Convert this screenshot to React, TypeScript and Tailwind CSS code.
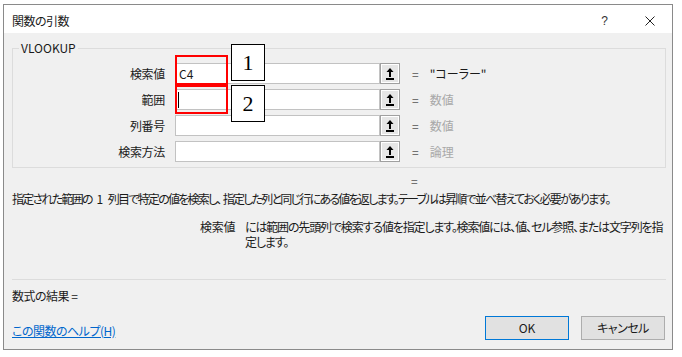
import React from "react"

const jp = "font-['Noto_Sans_CJK_JP','Noto_Sans',sans-serif] [font-feature-settings:'palt']"

const rows = [
  { label: "検索値", value: "\"コーラー\"", dark: true, text: "C4" },
  { label: "範囲", value: "数値", dark: false, text: "", cursor: true },
  { label: "列番号", value: "数値", dark: false, text: "" },
  { label: "検索方法", value: "論理", dark: false, text: "" },
]

function RefIcon() {
  return (
    <svg width="10" height="14" viewBox="0 0 10 14">
      <path d="M5 1 L8.5 5 L6 5 L6 10 L4 10 L4 5 L1.5 5 Z" fill="#000" />
      <rect x="1" y="11" width="8" height="2" fill="#000" />
    </svg>
  )
}

function ArgRow({ label, value, dark, text, cursor }: { label: string; value: string; dark: boolean; text: string; cursor?: boolean }) {
  return (
    <div className="flex items-center h-[21px]">
      <div className="w-[152px] text-right text-[12px] text-[#1a1a1a] leading-[16px] tracking-[-0.3px]">{label}</div>
      <div className="ml-[10px] w-[205px] h-[21px] bg-white border border-[#c2c2c2] flex items-center pl-[3px] text-[12px] relative">
        {cursor && <span className="absolute left-[2px] top-[2px] w-[1px] h-[16px] bg-black" />}
        {text}
      </div>
      <div className="w-[20px] h-[21px] border border-[#a0a0a0] bg-[#e6e6e6] shadow-[inset_1px_1px_0_#fff,inset_-1px_-1px_0_#fff] flex items-center justify-center">
        <RefIcon />
      </div>
      <span className="ml-[12px] text-[12px] text-[#555]">=</span>
      <span className={"ml-[11px] text-[12px] " + (dark ? "text-[#1a1a1a]" : "text-[#a8a8a8]")}>{value}</span>
    </div>
  )
}

export default function App() {
  return (
    <div className={"relative w-[682px] h-[357px] bg-white pl-[3px] pt-[4px] " + jp}>
      <div className="w-[670px] h-[346px] border border-[#8a8a8a] flex flex-col">
        <div className="shrink-0 h-[28px] bg-white flex items-center pt-[3px] pl-[8px] text-[12px] text-[#1a1a1a]">
          <span className="tracking-[-0.5px]">関数の引数</span>
          <span className="ml-auto mr-[37px] text-[12px] font-['Liberation_Sans',sans-serif] text-[#333]">?</span>
          <svg width="10" height="10" viewBox="0 0 10 10" className="mr-[17px]">
            <path d="M0.5 0.5 L9.5 9.5 M9.5 0.5 L0.5 9.5" stroke="#222" strokeWidth="1" />
          </svg>
        </div>
        <div className="flex-1 min-h-0 bg-[#f0f0f0] pl-[8px] pr-[6px] flex flex-col text-[#1a1a1a]">
          <fieldset className="shrink-0 mt-[7px] border border-[#dcdcdc] pt-[7px] pb-[5px]">
            <legend className="ml-[6px] px-[2px] text-[12px] leading-[16px]">VLOOKUP</legend>
            <div className="flex flex-col gap-[5px]">
              {rows.map((r) => (
                <ArgRow key={r.label} {...r} />
              ))}
            </div>
          </fieldset>
          <div className="mt-[5px] pl-[399px] text-[12px] leading-[16px] text-[#555]">=</div>
          <p className="mt-[2px] text-[12px] leading-[16px] whitespace-nowrap tracking-[-1.75px]">
            指定された範囲の<span className="tracking-normal px-[2px]"> 1 </span>列目で特定の値を検索し、<span className="ml-[2px]" />指定した列と同じ行にある値を返します。テーブルは昇順で並べ替えておく必要があります。
          </p>
          <div className="mt-[12px] flex text-[12px] leading-[15px]">
            <span className="ml-[188px] w-[45px] tracking-[-0.3px]">検索値</span>
            <p className="whitespace-nowrap tracking-[-1.15px]">
              には範囲の先頭列で検索する値を指定します。検索値には、値、セル参照、または文字列を指
              <br />
              定します。
            </p>
          </div>
          <div className="mt-[30px] h-[1px] bg-[#dcdcdc]" />
          <div className="mt-[8px] text-[12px] leading-[16px] tracking-[-0.5px]">数式の結果 =</div>
          <div className="mt-[12px] flex items-center">
            <a className="mt-[6px] text-[12px] text-[#0066cc] underline tracking-[-0.5px]">この関数のヘルプ(H)</a>
            <button className="ml-auto w-[84px] h-[24px] border border-[#0078d7] bg-[#e1e1e1] text-[12px]">OK</button>
            <button className="ml-[12px] mr-[1px] w-[84px] h-[24px] border border-[#adadad] bg-[#e1e1e1] text-[12px] tracking-[-0.5px]">キャンセル</button>
          </div>
        </div>
      </div>

      <div className="absolute left-[175px] top-[55px] w-[53px] h-[30px] border-2 border-[#ff0000]" />
      <div className="absolute left-[175px] top-[85px] w-[53px] h-[29px] border-2 border-[#ff0000]" />
      <div className="absolute left-[231px] top-[44px] w-[34px] h-[37px] bg-white border border-black flex items-center justify-center font-['Liberation_Serif',serif] text-[22px]">1</div>
      <div className="absolute left-[231px] top-[85px] w-[34px] h-[37px] bg-white border border-black flex items-center justify-center font-['Liberation_Serif',serif] text-[22px]">2</div>
    </div>
  )
}
